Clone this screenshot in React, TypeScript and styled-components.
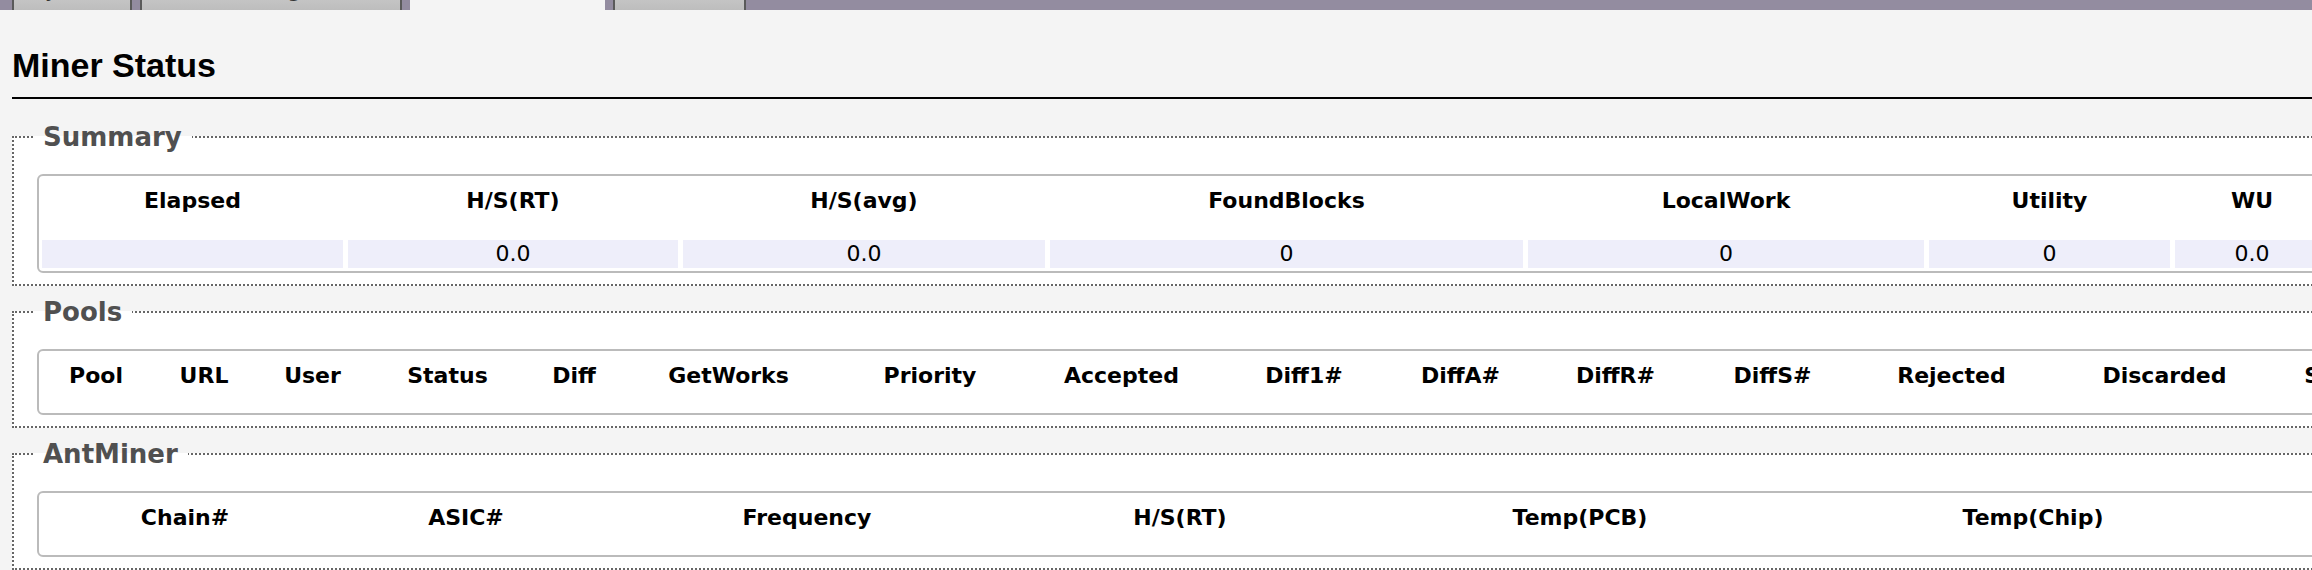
import React from "react";
import styled, { createGlobalStyle } from "styled-components";

const GlobalStyle = createGlobalStyle`
  html, body {
    margin: 0;
    padding: 0;
    overflow: hidden;
    background: #f4f4f4;
  }
  body {
    font-family: "DejaVu Sans", Verdana, sans-serif;
    color: #000;
  }
`;

const Page = styled.div`
  width: 2700px;
`;

const TabBar = styled.nav`
  display: flex;
  gap: 8px;
  height: 44px;
  margin-top: -34px;
  padding-left: 12px;
  background: #938ca0;
`;

const Tab = styled.div<{ $active?: boolean; $w: number }>`
  width: ${(p) => p.$w}px;
  box-sizing: border-box;
  display: flex;
  align-items: flex-end;
  justify-content: center;
  padding-bottom: 9px;
  font-size: 22px;
  line-height: 22px;
  color: #333;
  white-space: nowrap;
  overflow: hidden;
  border-left: ${(p) => (p.$active ? "none" : "2px solid #5a5a5a")};
  border-right: ${(p) => (p.$active ? "none" : "2px solid #5a5a5a")};
  background: ${(p) =>
    p.$active ? "#f4f4f4" : "linear-gradient(to bottom, #dcdcdc, #bdbdbd)"};
`;

const Content = styled.main`
  padding-left: 12px;
`;

const Title = styled.h2`
  margin: 35px 0 0;
  padding-bottom: 12px;
  border-bottom: 2px solid #000;
  font-family: "Liberation Sans", Arial, sans-serif;
  font-weight: bold;
  font-size: 34px;
  line-height: 40px;
  color: #000;
`;

const Sections = styled.div`
  display: flex;
  flex-direction: column;
  gap: 11px;
  margin-top: 23px;
`;

const Section = styled.fieldset`
  margin: 0;
  min-width: 0;
  padding: 22px 0 11px 19px;
  border: 2px dotted #666;
  background: #fff;
`;

const Legend = styled.legend`
  padding: 0 10px;
  font-size: 26px;
  line-height: 30px;
  font-weight: bold;
  color: #505050;
`;

const TableBox = styled.div`
  margin-left: 4px;
  border: 2px solid #bbb;
  border-radius: 6px;
  padding: 3px;
  background: #fff;
`;

const Grid = styled.div<{ $cols: number[]; $gap: number }>`
  display: grid;
  grid-template-columns: ${(p) => p.$cols.map((c) => `${c}px`).join(" ")};
  column-gap: ${(p) => p.$gap}px;
  row-gap: 5px;
`;

const HeadCell = styled.div`
  padding: 9px 0 22px;
  font-size: 22px;
  line-height: 25px;
  font-weight: bold;
  text-align: center;
  white-space: nowrap;
`;

const DataCell = styled.div`
  height: 28px;
  line-height: 28px;
  font-size: 22px;
  text-align: center;
  white-space: nowrap;
  background: #eeeefa;
`;

const summaryCols = [301, 330, 362, 473, 396, 241, 154];
const summaryHead = ["Elapsed", "H/S(RT)", "H/S(avg)", "FoundBlocks", "LocalWork", "Utility", "WU"];
const summaryData = ["", "0.0", "0.0", "0", "0", "0", "0.0"];

const poolCols = [108, 108, 109, 161, 92, 217, 186, 197, 168, 145, 165, 149, 209, 217, 126];
const poolHead = [
  "Pool",
  "URL",
  "User",
  "Status",
  "Diff",
  "GetWorks",
  "Priority",
  "Accepted",
  "Diff1#",
  "DiffA#",
  "DiffR#",
  "DiffS#",
  "Rejected",
  "Discarded",
  "Stale",
];

const minerCols = [286, 276, 406, 340, 460, 446];
const minerHead = ["Chain#", "ASIC#", "Frequency", "H/S(RT)", "Temp(PCB)", "Temp(Chip)"];

const tabs = [
  { label: "System", w: 120 },
  { label: "Miner Configuration", w: 262 },
  { label: "Miner Status", w: 195, active: true },
  { label: "Network", w: 133 },
];

export default function App() {
  return (
    <Page>
      <GlobalStyle />
      <TabBar>
        {tabs.map((t) => (
          <Tab key={t.label} $w={t.w} $active={t.active}>
            {t.label}
          </Tab>
        ))}
      </TabBar>
      <Content>
        <Title>Miner Status</Title>
        <Sections>
          <Section>
            <Legend>Summary</Legend>
            <TableBox>
              <Grid $cols={summaryCols} $gap={5}>
                {summaryHead.map((h) => (
                  <HeadCell key={h}>{h}</HeadCell>
                ))}
                {summaryData.map((d, i) => (
                  <DataCell key={i}>{d}</DataCell>
                ))}
              </Grid>
            </TableBox>
          </Section>
          <Section>
            <Legend>Pools</Legend>
            <TableBox>
              <Grid $cols={poolCols} $gap={0}>
                {poolHead.map((h) => (
                  <HeadCell key={h}>{h}</HeadCell>
                ))}
              </Grid>
            </TableBox>
          </Section>
          <Section>
            <Legend>AntMiner</Legend>
            <TableBox>
              <Grid $cols={minerCols} $gap={0}>
                {minerHead.map((h) => (
                  <HeadCell key={h}>{h}</HeadCell>
                ))}
              </Grid>
            </TableBox>
          </Section>
        </Sections>
      </Content>
    </Page>
  );
}
